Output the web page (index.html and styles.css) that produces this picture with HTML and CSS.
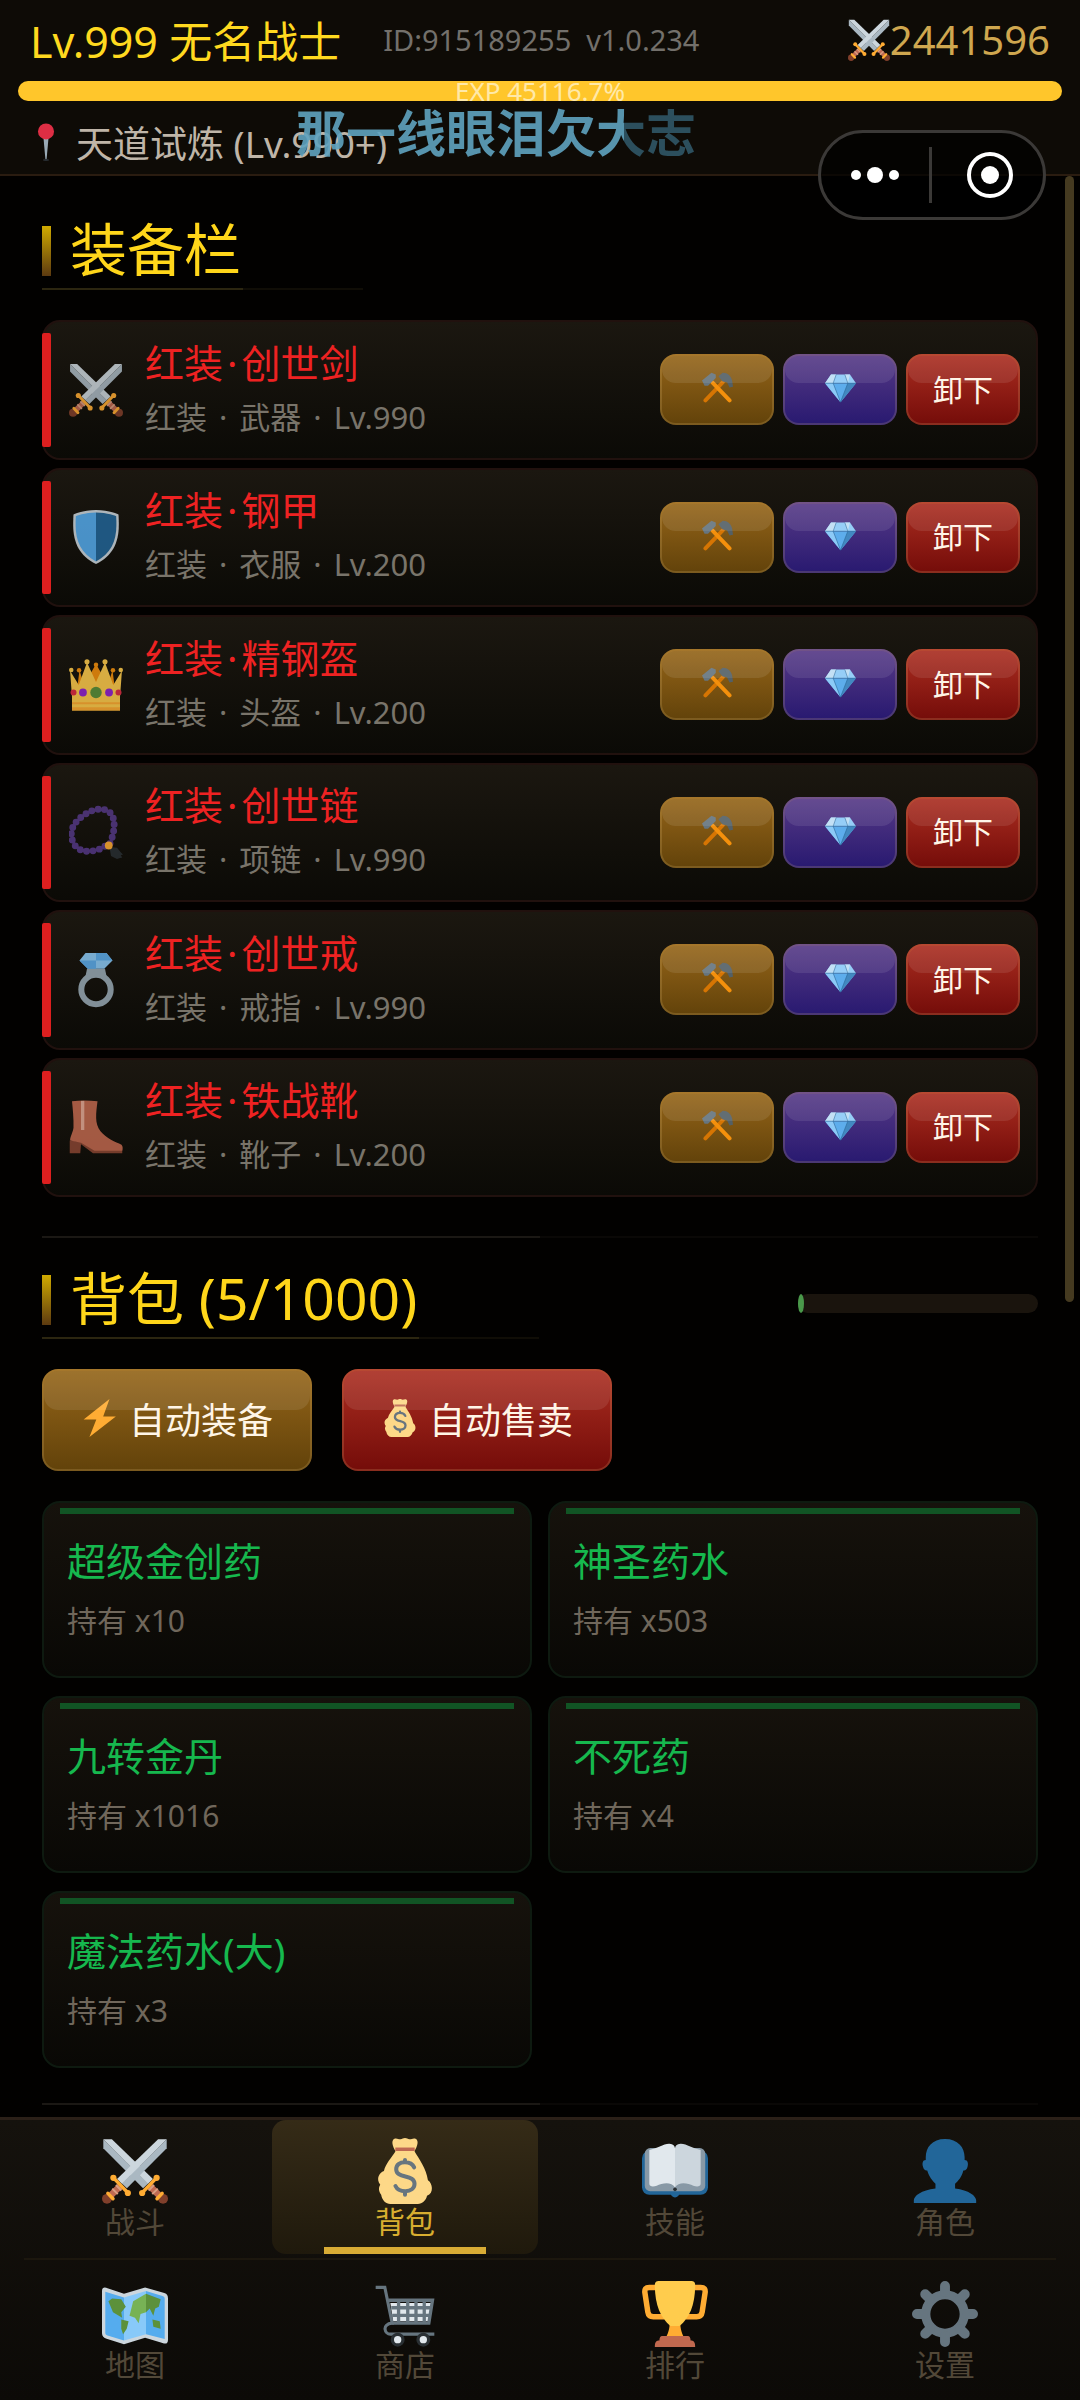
FILE: index.html
```html
<!DOCTYPE html>
<html lang="zh-CN">
<head>
    <meta charset="UTF-8">
    <meta name="viewport" content="width=device-width, initial-scale=1.0">
    <title>背包</title>
    <link rel="stylesheet" href="styles.css">
</head>
<body>
    <!-- 图标 -->
    <svg class="sprite" aria-hidden="true">
        <symbol id="sword" viewBox="0 0 36 36">
            <path fill="#aab8c2" d="M35.3.7V5.6L13.6 27.4 10.8 24.8z"/>
            <path fill="#ccd6dd" d="M35.3.7H30.6L8.2 22.3l2.7 2.6z"/>
            <path fill="none" stroke="#bf6952" stroke-width="3.6" d="M10.6 25.6 3.8 32.2"/>
            <path fill="none" stroke="#d99e82" stroke-width="1.1" d="M7.6 25.6l3 3M5.6 27.6l3 3"/>
            <circle cx="2.7" cy="33.2" r="2.7" fill="#803f2b"/>
            <path fill="none" stroke="#ffac33" stroke-width="1.9" stroke-linecap="round" d="M6.4 21.9l7.7 8M3.2 30.2l2.8 2.9"/>
            <circle cx="6.2" cy="21.7" r="1.7" fill="#ffac33"/>
            <circle cx="14.1" cy="30" r="1.7" fill="#ffac33"/>
        </symbol>
        <symbol id="swords" viewBox="0 0 36 36">
            <g transform="translate(36 0) scale(-1 1)"><use href="#sword" width="36" height="36"/></g>
            <use href="#sword" width="36" height="36"/>
        </symbol>
        <symbol id="pin" viewBox="0 0 36 36">
            <path fill="#99aab5" d="M15.6 14h4.8L18.5 35h-1z"/>
            <ellipse cx="18" cy="35" rx="3" ry="1" fill="#292f33"/>
            <circle cx="18" cy="8" r="7.6" fill="#dd2e44"/>
        </symbol>
        <symbol id="shield" viewBox="0 0 36 36">
            <path fill="#ccd6dd" d="M33 3S27 0 18 0 3 3 3 3s-.2 2.500-.2 7C2.800 22 7 30.500 18 36c11-5.500 15.200-14 15.200-26C33.200 5.500 33 3 33 3z"/>
            <path fill="#55acee" d="M18 1.600C10.500 1.600 4.600 4 4.600 4s-.2 2-.2 6C4.400 21 8.200 29 18 34.300z"/>
            <path fill="#269" d="M18 1.600C25.500 1.600 31.400 4 31.400 4s.2 2 .2 6C31.600 21 27.800 29 18 34.300z"/>
        </symbol>
        <symbol id="crown" viewBox="0 0 36 36">
            <path fill="#f4900c" d="M7 8l3 10 8-14 8 14 3-10 2 16H5z"/>
            <g fill="#f4900c"><circle cx="6.700" cy="8.200" r="1.500"/><circle cx="18" cy="4.500" r="1.500"/><circle cx="29.300" cy="8.200" r="1.500"/></g>
            <path fill="#ffcc4d" d="M2 35V26L.7 8.500l5.800 9.500L12 3l6 13L24 3l5.500 15 5.800-9.500L34 26v9z"/>
            <g fill="#ffcc4d"><circle cx="1.500" cy="8" r="1.500"/><circle cx="12" cy="2.500" r="1.700"/><circle cx="24" cy="2.500" r="1.700"/><circle cx="34.500" cy="8" r="1.500"/></g>
            <path fill="#ffac33" d="M2 29.500h32v1.300H2zM2 32.800h32V35H2z"/>
            <circle cx="18" cy="23" r="3.800" fill="#5c913b"/>
            <g fill="#9224d0"><circle cx="9.300" cy="23" r="2.600"/><circle cx="26.700" cy="23" r="2.600"/></g>
            <g fill="#dd2e44"><circle cx="3" cy="23" r="2"/><circle cx="33" cy="23" r="2"/></g>
        </symbol>
        <symbol id="beads" viewBox="0 0 36 36">
            <path fill="none" stroke="#553986" stroke-width="4.600" stroke-linecap="round" stroke-dasharray="0 4.300" d="M24 27.500C19 31 8 33 4 27S1 15 6 10 19 1 25 3.500s7 12 1.500 24"/>
            <path fill="#292f33" d="M27 28l5 .5 2.500 3 1.500 1.500-1.500.5 1 1.500-2 .5-1.500.5-4-2z"/>
            <circle cx="26.500" cy="27" r="2.600" fill="#ffac33"/>
        </symbol>
        <symbol id="ring" viewBox="0 0 36 36">
            <path fill="#99aab5" d="M12 10.500h12l1 5H11z"/>
            <circle cx="18" cy="24.300" r="9.800" fill="none" stroke="#99aab5" stroke-width="4"/>
            <path fill="#8ccaf7" d="M11 0h14l4 5-5.500 5.500h-11L7 5z"/>
            <path fill="#5dadec" d="M18 0h7l4 5H18zM7 5h11v5.500h-5.500z"/>
        </symbol>
        <symbol id="boot" viewBox="0 0 36 36">
            <path fill="#8a4633" d="M.5 27v8.500h7l.5-6 8 6H35.500V31z"/>
            <path fill="#c1694f" d="M2 .8Q10 0 19 .8c-1 8-2 15 2 20 4 5 10 7 14 9 1 1 .8 3.500.5 4H17L8 28.500.8 27C.5 25 2.500 22 3 18.500 3.200 12 2.500 6 2 .8z"/>
            <path fill="#e6aa96" d="M8 .6h2.200V20H8z"/>
        </symbol>
        <symbol id="hammers" viewBox="0 0 36 36">
            <path fill="none" stroke="#d67503" stroke-width="4.600" stroke-linecap="round" d="M24 12 4 33"/>
            <path fill="#546066" d="M19 5l5-4c6 0 10 4 11 9l1 7-4 1-3-6-5-1z"/>
            <path fill="none" stroke="#f4900c" stroke-width="4.600" stroke-linecap="round" d="M12 12l20 21"/>
            <path fill="#66757f" d="M0 10 11 1l5 2v4l-9 9H3z"/>
        </symbol>
        <symbol id="gem" viewBox="0 0 36 36">
            <path fill="#5dadec" d="M0 13 18 35 36 13z"/>
            <path fill="#8ccaf7" d="M7 3h22l7 10H0z"/>
            <path fill="#bdddf4" d="M7 3h6L9.500 13H0zM23 3h6l-2.500 10z"/>
            <path fill="#4289c1" d="M36 13 18 35l8.500-22z"/>
            <path fill="#8ccaf7" d="M0 13 18 35 9.500 13z"/>
            <path fill="none" stroke="#2a6797" stroke-width=".7" d="M0 13h36M9.500 13 18 35l8.500-22M13 3 9.500 13M23 3l3.500 10"/>
        </symbol>
        <symbol id="bolt" viewBox="0 0 36 36">
            <path fill="#ffac33" d="M27 0 2.500 19.500h12L8 36l25-19.500H21z"/>
        </symbol>
        <symbol id="bag" viewBox="0 0 36 36">
            <path fill="#fdd888" d="M13 7.500C11 4 10.500 1.500 12 .5c1.500-.8 2.500.4 3.500.2S17 0 18 0s1.500.6 2.500.7S22.500-.2 24 .5c1.500 1 1 3.500-1 7z"/>
            <path fill="#fdd888" d="M13 7h10c3 5 6.500 9.500 7.500 16 2.500 1.500 3.500 7-.5 8.500-.5 2.500-2.500 4.500-5 4.500H10c-2.500 0-4.500-2-5-5-2-3-1-4.500-.5-5.500C2 22 4 19 6.500 18c1-4 4-7 6.500-11z"/>
            <path fill="#bf6952" d="M12.700 5.200h10.600v1.900H12.700z"/>
            <path fill="none" stroke="#67757f" stroke-width="2.200" stroke-linecap="round" d="M23 16c-1-2.200-3-2.800-5-2.800-3 0-4.800 1.500-4.800 3.800 0 5.500 10 2.500 10 8 0 2.500-2.200 4-5 4-2.500 0-4.500-.8-5.400-2.800M18 12v1M18 29.500V31"/>
        </symbol>
        <symbol id="book" viewBox="0 0 36 36">
            <rect x="0" y="7" width="36" height="24" rx="4" fill="#269"/>
            <circle cx="18" cy="30" r="2.400" fill="#269"/>
            <rect x="1.500" y="5.500" width="33" height="23.500" rx="3" fill="#8899a6"/>
            <path fill="#e1e8ed" d="M4 6.500C8 6 12 3 15 3.200c2 .2 3 1.300 3 2.500V27c-2-3.500-7-2.500-10-1-2 .8-4 .5-4-1z"/>
            <path fill="#ccd6dd" d="M32 6.500C28 6 24 3 21 3.200c-2 .2-3 1.300-3 2.500V27c2-3.500 7-2.500 10-1 2 .8 4 .5 4-1z"/>
            <circle cx="18" cy="28" r="1" fill="#292f33"/>
        </symbol>
        <symbol id="bust" viewBox="0 0 36 36">
            <path fill="#269" d="M18 .5C11 .5 7.500 5 7.500 10.500V12c-1.800 0-2 2-1.500 3.700.4 1.600 1.300 2.200 2.300 2C9.500 21.500 11 23 12.800 25v2.500C5 28.500 1 31.500 1 34v1.500h34V34c0-2.500-4-5.500-11.500-6.500V25c2-2 3.500-3.500 4.500-7.300 1 .2 1.900-.4 2.300-2C30.800 14 30.500 12 28.700 12v-1.500C28.700 5 25 .5 18 .5z"/>
        </symbol>
        <symbol id="map" viewBox="0 0 36 36">
            <path fill="#ccd6dd" d="M0 5.500C0 3 2 3.500 3 4l9 3 11.500-3.500L34 6.500c1.500.5 2 1.500 2 3V32c0 2.500-1.500 2.300-3 1.800L23.500 31 12 34.500 2.500 31.500C1 31 0 30 0 28.500z"/>
            <path fill="#55acee" d="M1.800 5.800 12 9v23.500L3 29.700c-.8-.2-1.200-.7-1.200-1.500z"/>
            <path fill="#88c9f9" d="M12 9l12-3.500V29l-12 3.500z"/>
            <path fill="#55acee" d="M24 5.500l9 2.700c.8.200 1.200.7 1.200 1.500v22L24 29z"/>
            <path fill="#5c913b" d="M3.500 11l2-1.500 5 .5 2.500 4-2.500 3L11 20 6 17zM10.500 21l4 1-1 4-2 3-1-3z"/>
            <path fill="#77b255" d="M15.500 17l1.500-6 7-4v10l-3 1-1 5-2-3-3-1z"/>
            <path fill="#5c913b" d="M24 7l8 3-1 4-2 1-1 4-2-4-2 2zM27.500 21l4 1 .5 4-4-1z"/>
        </symbol>
        <symbol id="cart" viewBox="0 0 36 36">
            <path fill="#e1e8ed" d="M10 12h23l-1.500 10H11.500z"/>
            <path fill="none" stroke="#66757f" stroke-width="1.800" d="M9 10.500h24L31 23H11M10.500 14.600h22M11 18.800h21M14.500 11v12M19.500 11v12M24 11v12M28.500 11v12"/>
            <path fill="none" stroke="#66757f" stroke-width="1.700" d="M2 3.500h5l4 19.500c-6 .5-4 6-1 6h24"/>
            <circle cx="14" cy="32" r="2.900" fill="#e1e8ed" stroke="#292f33" stroke-width="1.800"/>
            <circle cx="28" cy="32" r="2.900" fill="#e1e8ed" stroke="#292f33" stroke-width="1.800"/>
        </symbol>
        <symbol id="trophy" viewBox="0 0 36 36">
            <path fill="none" stroke="#ffac33" stroke-width="3" d="M9 3.500H4c-2 0-2.700 1-2.400 3L3.200 17c.3 2 1.300 2.500 3 2.500H12M27 3.500h5c2 0 2.700 1 2.400 3L32.800 17c-.3 2-1.300 2.500-3 2.500H24"/>
            <path fill="#ffac33" d="M15 20h6c-.5 5 .5 8 2 11H13c1.500-3 2.500-6 2-11z"/>
            <path fill="#ffcc4d" d="M9 0h18c1 0 2 .5 2 2C29 13 26 20 20.500 24.500h-5C10 20 7 13 7 2 7 .5 8 0 9 0z"/>
            <path fill="#c1694f" d="M11 30h14c1 0 1.500 1 1.500 2.500 1.500 0 2.500.5 2.500 3.500H7c0-3 1-3.500 2.500-3.500C9.500 31 10 30 11 30z"/>
        </symbol>
        <symbol id="gear" viewBox="0 0 36 36">
            <g fill="none" stroke="#66757f" stroke-linecap="round">
                <circle cx="18" cy="18" r="10.500" stroke-width="5"/>
                <path stroke-width="5.400" d="M18 2.700V6M18 30v3.300M2.700 18H6M30 18h3.300M7.200 7.200l2.500 2.500M26.300 26.300l2.500 2.500M28.800 7.200l-2.500 2.500M9.700 26.300l-2.500 2.500"/>
            </g>
        </symbol>
    </svg>

    <!-- 顶部状态栏 -->
    <header class="topbar">
        <div class="player">
            <span class="player-name">Lv.999 无名战士</span>
            <span class="player-id">ID:915189255</span>
            <span class="player-version">v1.0.234</span>
            <span class="power"><svg class="power-icon"><use href="#swords"/></svg>2441596</span>
        </div>
        <div class="exp-bar"><span class="exp-text">EXP 45116.7%</span></div>
        <div class="location"><svg class="pin-icon"><use href="#pin"/></svg>天道试炼 (Lv.990+)</div>
        <div class="lyric">那一线眼泪欠大志</div>
        <div class="capsule">
            <button type="button" aria-label="更多">
                <svg width="50" height="20" viewBox="0 0 50 20" fill="#fff"><circle cx="6" cy="10" r="5"/><circle cx="25" cy="10" r="8"/><circle cx="44" cy="10" r="5"/></svg>
            </button>
            <button type="button" aria-label="关闭">
                <svg width="48" height="48" viewBox="0 0 48 48"><circle cx="24" cy="24" r="21" fill="none" stroke="#fff" stroke-width="4"/><circle cx="24" cy="24" r="9" fill="#fff"/></svg>
            </button>
        </div>
    </header>

    <main class="content">
        <div class="scroll-thumb"></div>

        <section>
            <h2 class="title">装备栏</h2>
            <div class="equip-list">
                <div class="equip">
                    <svg class="equip-icon"><use href="#swords"/></svg>
                    <div class="equip-info">
                        <div class="equip-name">红装<span>·</span>创世剑</div>
                        <div class="equip-meta"><span>红装</span><span>·</span><span>武器</span><span>·</span><span>Lv.990</span></div>
                    </div>
                    <button type="button" class="btn gold" aria-label="强化"><svg><use href="#hammers"/></svg></button>
                    <button type="button" class="btn purple" aria-label="镶嵌"><svg><use href="#gem"/></svg></button>
                    <button type="button" class="btn red">卸下</button>
                </div>
                <div class="equip">
                    <svg class="equip-icon"><use href="#shield"/></svg>
                    <div class="equip-info">
                        <div class="equip-name">红装<span>·</span>钢甲</div>
                        <div class="equip-meta"><span>红装</span><span>·</span><span>衣服</span><span>·</span><span>Lv.200</span></div>
                    </div>
                    <button type="button" class="btn gold" aria-label="强化"><svg><use href="#hammers"/></svg></button>
                    <button type="button" class="btn purple" aria-label="镶嵌"><svg><use href="#gem"/></svg></button>
                    <button type="button" class="btn red">卸下</button>
                </div>
                <div class="equip">
                    <svg class="equip-icon"><use href="#crown"/></svg>
                    <div class="equip-info">
                        <div class="equip-name">红装<span>·</span>精钢盔</div>
                        <div class="equip-meta"><span>红装</span><span>·</span><span>头盔</span><span>·</span><span>Lv.200</span></div>
                    </div>
                    <button type="button" class="btn gold" aria-label="强化"><svg><use href="#hammers"/></svg></button>
                    <button type="button" class="btn purple" aria-label="镶嵌"><svg><use href="#gem"/></svg></button>
                    <button type="button" class="btn red">卸下</button>
                </div>
                <div class="equip">
                    <svg class="equip-icon"><use href="#beads"/></svg>
                    <div class="equip-info">
                        <div class="equip-name">红装<span>·</span>创世链</div>
                        <div class="equip-meta"><span>红装</span><span>·</span><span>项链</span><span>·</span><span>Lv.990</span></div>
                    </div>
                    <button type="button" class="btn gold" aria-label="强化"><svg><use href="#hammers"/></svg></button>
                    <button type="button" class="btn purple" aria-label="镶嵌"><svg><use href="#gem"/></svg></button>
                    <button type="button" class="btn red">卸下</button>
                </div>
                <div class="equip">
                    <svg class="equip-icon"><use href="#ring"/></svg>
                    <div class="equip-info">
                        <div class="equip-name">红装<span>·</span>创世戒</div>
                        <div class="equip-meta"><span>红装</span><span>·</span><span>戒指</span><span>·</span><span>Lv.990</span></div>
                    </div>
                    <button type="button" class="btn gold" aria-label="强化"><svg><use href="#hammers"/></svg></button>
                    <button type="button" class="btn purple" aria-label="镶嵌"><svg><use href="#gem"/></svg></button>
                    <button type="button" class="btn red">卸下</button>
                </div>
                <div class="equip">
                    <svg class="equip-icon"><use href="#boot"/></svg>
                    <div class="equip-info">
                        <div class="equip-name">红装<span>·</span>铁战靴</div>
                        <div class="equip-meta"><span>红装</span><span>·</span><span>靴子</span><span>·</span><span>Lv.200</span></div>
                    </div>
                    <button type="button" class="btn gold" aria-label="强化"><svg><use href="#hammers"/></svg></button>
                    <button type="button" class="btn purple" aria-label="镶嵌"><svg><use href="#gem"/></svg></button>
                    <button type="button" class="btn red">卸下</button>
                </div>
            </div>
        </section>

        <hr class="divider">

        <section>
            <div class="title-row">
                <h2 class="title">背包 (5/1000)</h2>
                <div class="capacity"><div class="capacity-fill"></div></div>
            </div>
            <div class="actions">
                <button type="button" class="btn big gold"><svg><use href="#bolt"/></svg>自动装备</button>
                <button type="button" class="btn big red"><svg><use href="#bag"/></svg>自动售卖</button>
            </div>
            <div class="items">
                <div class="item"><div class="item-name">超级金创药</div><div class="item-count">持有 x10</div></div>
                <div class="item"><div class="item-name">神圣药水</div><div class="item-count">持有 x503</div></div>
                <div class="item"><div class="item-name">九转金丹</div><div class="item-count">持有 x1016</div></div>
                <div class="item"><div class="item-name">不死药</div><div class="item-count">持有 x4</div></div>
                <div class="item"><div class="item-name">魔法药水(大)</div><div class="item-count">持有 x3</div></div>
            </div>
        </section>

        <hr class="divider last">
    </main>

    <!-- 底部导航 -->
    <nav class="tabs">
        <div class="tab-row">
            <a href="#" class="tab"><svg><use href="#swords"/></svg>战斗</a>
            <a href="#" class="tab active"><svg><use href="#bag"/></svg>背包</a>
            <a href="#" class="tab"><svg><use href="#book"/></svg>技能</a>
            <a href="#" class="tab"><svg><use href="#bust"/></svg>角色</a>
        </div>
        <div class="tab-line"></div>
        <div class="tab-row">
            <a href="#" class="tab"><svg><use href="#map"/></svg>地图</a>
            <a href="#" class="tab"><svg><use href="#cart"/></svg>商店</a>
            <a href="#" class="tab"><svg><use href="#trophy"/></svg>排行</a>
            <a href="#" class="tab"><svg><use href="#gear"/></svg>设置</a>
        </div>
    </nav>
</body>
</html>
```
FILE: styles.css
```css
* {
    box-sizing: border-box;
}

body {
    margin: 0;
    min-height: 100vh;
    display: flex;
    flex-direction: column;
    background-color: #020100;
    font-family: "Noto Sans", "Noto Sans CJK SC", sans-serif;
    font-size: 30px;
}

.sprite {
    position: absolute;
    width: 0;
    height: 0;
}

button {
    font-family: inherit;
    cursor: pointer;
}

/* 顶部 */
.topbar {
    position: relative;
    height: 176px;
    padding: 0 18px;
    background-color: #0e0b06;
    border-bottom: 2px solid #2a1c10;
}

.player {
    display: flex;
    align-items: center;
    height: 81px;
    padding: 0 12px 2px;
    white-space: nowrap;
}

.player-name {
    font-size: 43px;
    color: #ffd91f;
}

.player-id,
.player-version {
    font-size: 29px;
    color: #73706b;
}

.player-id {
    margin-left: 42px;
}

.player-version {
    margin-left: 15px;
}

.power {
    margin-left: auto;
    display: flex;
    align-items: center;
    font-size: 40px;
    color: #cfa74f;
}

.power-icon {
    width: 42px;
    height: 42px;
}

.exp-bar {
    height: 20px;
    border-radius: 10px;
    background-color: #ffc62b;
    display: flex;
    align-items: center;
    justify-content: center;
}

.exp-text {
    font-size: 26px;
    line-height: 20px;
    color: rgba(255, 250, 225, 0.7);
}

.location {
    display: flex;
    align-items: center;
    height: 73px;
    padding: 8px 10px 0 8px;
    font-size: 37px;
    color: #bfb5a8;
}

.pin-icon {
    width: 40px;
    height: 38px;
    margin-right: 10px;
}

.lyric {
    position: absolute;
    left: 296px;
    top: 103px;
    font-size: 50px;
    line-height: 60px;
    font-weight: bold;
    color: transparent;
    background: linear-gradient(90deg, #5fa3c0 82%, #305767 82%);
    -webkit-background-clip: text;
    background-clip: text;
    opacity: 0.9;
}

.capsule {
    position: absolute;
    z-index: 2;
    right: 34px;
    top: 130px;
    width: 228px;
    height: 90px;
    display: flex;
    border: 3px solid #3b3937;
    border-radius: 45px;
    background-color: rgba(0, 0, 0, 0.7);
}

.capsule button {
    flex: 1;
    display: flex;
    align-items: center;
    justify-content: center;
    padding: 0 0 0 4px;
    border: none;
    background: none;
}

.capsule button:first-child {
    padding: 0 4px 0 0;
    background: linear-gradient(#3b3937, #3b3937) no-repeat right center / 3px 56px;
}

/* 内容 */
.content {
    position: relative;
    flex: 1;
    padding: 42px 42px 12px;
}

.scroll-thumb {
    position: absolute;
    top: 0;
    right: 6px;
    width: 9px;
    height: 58%;
    border-radius: 5px;
    background-color: #453a20;
}

.title {
    position: relative;
    width: fit-content;
    margin: 0;
    padding: 0 2px 10px 28px;
    font-size: 57px;
    line-height: 62px;
    font-weight: normal;
    color: #ffd61a;
    background: linear-gradient(#2c2610, #2c2610) no-repeat left bottom / 100% 2px;
}

.title::before {
    content: "";
    position: absolute;
    left: 0;
    top: 8px;
    width: 9px;
    height: 50px;
    background: linear-gradient(#d0aa00, #5c3a10);
}

.title::after {
    content: "";
    position: absolute;
    left: 100%;
    bottom: 0;
    width: 120px;
    height: 2px;
    background-color: #100d06;
}

.equip-list {
    display: grid;
    grid-auto-rows: 1fr;
    gap: 8px;
    min-height: 877px;
    margin-top: 30px;
}

.equip {
    position: relative;
    display: flex;
    align-items: center;
    gap: 9px;
    padding: 0 16px 0 25px;
    border: 2px solid #21110e;
    border-radius: 18px;
    background: linear-gradient(#1b1710, #0b0a06);
}

.equip::before {
    content: "";
    position: absolute;
    left: -2px;
    top: 11px;
    bottom: 11px;
    width: 9px;
    border-radius: 2px;
    background-color: #dd1f1f;
}

.equip-icon {
    width: 54px;
    height: 56px;
    opacity: 0.83;
}

.equip-info {
    flex: 1;
    margin-left: 13px;
    line-height: 54px;
}

.equip-name {
    font-size: 39px;
    color: #ee2222;
}

.equip-name span {
    padding: 0 4px;
}

.equip-meta {
    display: flex;
    gap: 12px;
    font-size: 31px;
    color: #79746a;
}

.btn {
    position: relative;
    display: flex;
    align-items: center;
    justify-content: center;
    width: 114px;
    height: 71px;
    padding: 0 0 4px;
    border: 2px solid rgba(255, 220, 140, 0.16);
    border-radius: 16px;
    font-size: 30px;
    color: #fff5e6;
    background-origin: border-box;
}

.btn::before {
    content: "";
    position: absolute;
    left: 0;
    right: 0;
    top: 0;
    height: 40%;
    border-radius: 14px;
    background-color: rgba(255, 255, 255, 0.09);
}

.btn svg {
    width: 31px;
    height: 31px;
}

.btn.gold {
    background-image: linear-gradient(#956519, #62420a);
}

.btn.purple {
    background-image: linear-gradient(#573a86, #281970);
}

.btn.red {
    background-image: linear-gradient(#ab2e21, #740c09);
}

.btn.big {
    width: 270px;
    height: 102px;
    gap: 10px;
    font-size: 36px;
}

.btn.big svg {
    width: 38px;
    height: 38px;
}

.divider {
    height: 2px;
    margin: 39px 0 29px;
    border: none;
    background: linear-gradient(90deg, #1b1814 50%, #0a0806 50%);
}

.divider.last {
    margin: 35px 0 0;
}

.title-row {
    display: flex;
    justify-content: space-between;
    align-items: center;
}

.capacity {
    width: 240px;
    height: 19px;
    border-radius: 10px;
    background-color: #1a140d;
}

.capacity-fill {
    width: 6px;
    height: 100%;
    border-radius: 50%;
    background-color: #4a984a;
}

.actions {
    display: flex;
    gap: 30px;
    margin-top: 30px;
}

.items {
    display: grid;
    grid-template-columns: 1fr 1fr;
    gap: 18px 16px;
    margin-top: 30px;
}

.item {
    position: relative;
    height: 177px;
    padding: 28px 23px;
    border: 2px solid #0e1a10;
    border-radius: 18px;
    background: linear-gradient(#16120c, #090805);
    line-height: 60px;
    color: #70675b;
}

.item::before {
    content: "";
    position: absolute;
    left: 16px;
    right: 16px;
    top: 5px;
    height: 6px;
    background-color: #115424;
}

.item-name {
    font-size: 39px;
    color: #16b84e;
}

/* 底部导航 */
.tabs {
    padding-bottom: 4px;
    border-top: 3px solid #2b2018;
    background: linear-gradient(#15120d, #0c0a07);
}

.tab-row {
    display: grid;
    grid-template-columns: repeat(4, 1fr);
}

.tab-line {
    height: 2px;
    margin: 4px 24px 3px;
    background-color: #1c170e;
}

.tab {
    position: relative;
    display: flex;
    flex-direction: column;
    align-items: center;
    height: 134px;
    margin: 0 2px;
    padding-top: 17px;
    border-radius: 14px;
    line-height: 34px;
    color: #524838;
    text-decoration: none;
}

.tab svg {
    width: 66px;
    height: 68px;
}

.tab.active {
    color: #d8ae30;
    background: linear-gradient(#352b17, #1f190c);
}

.tab.active::after {
    content: "";
    position: absolute;
    left: 52px;
    right: 52px;
    bottom: 0;
    height: 7px;
    background-color: #d9ac35;
}
```
